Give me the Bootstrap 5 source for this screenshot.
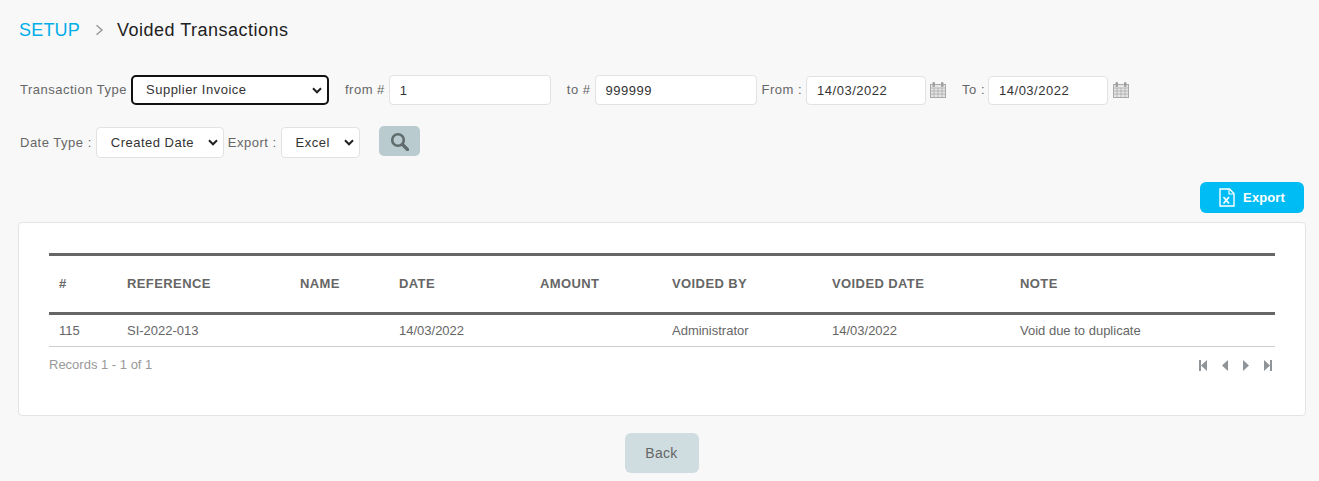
<!DOCTYPE html>
<html lang="en">
<head>
<meta charset="utf-8">
<title>Voided Transactions</title>
<link href="https://cdn.jsdelivr.net/npm/bootstrap@5.3.0/dist/css/bootstrap.min.css" rel="stylesheet">
<style>
body{background:#f8f8f8;font-family:"Liberation Sans",Arial,sans-serif;color:#666;height:481px;overflow:hidden}
.page-wrap{padding:18px 13px 0 18px}
.crumbs{height:24px;font-size:18px;letter-spacing:.5px;line-height:24px;color:#222;margin-left:1px}
.crumbs a{color:#00aee8;text-decoration:none;font-size:18px;letter-spacing:.2px}
.crumb-sep{width:37px;justify-content:center;padding-left:2px}
.filter-line{font-size:13px;letter-spacing:.5px;color:#666;padding-left:2px}
.line-a{margin-top:33px;height:30px}
.line-b{margin-top:22px;height:31px}
.filter-line .form-control,.filter-line .form-select{font-size:13px;letter-spacing:.5px;color:#333;border:1px solid #e2e2e2;border-radius:4px;height:30px;min-height:0;padding:0 10px;box-shadow:none;background-color:#fff;flex:none}
.filter-line .form-select{padding:0 24px 0 14px;background-position:right 5px center;background-size:10px 7px;background-image:url("data:image/svg+xml,%3csvg xmlns='http://www.w3.org/2000/svg' viewBox='0 0 10 7'%3e%3cpath fill='none' stroke='%23222' stroke-width='2' d='M1 1.300l4 4 4-4'/%3e%3c/svg%3e")}
.sel-type{width:198px;margin-left:4px}
.filter-line .sel-type{border:2px solid #111;border-radius:5px;padding-left:13px}
.inp-num{width:162px}
.inp-date{width:120px;margin-top:1px}
.filter-line .inp-date{height:29px}
.lbl-from{margin-left:16px;margin-right:4px}
.lbl-to{margin-left:16px;margin-right:4px}
.lbl-dfrom{margin-left:5px;margin-right:4px}
.lbl-dto{margin-left:16px;margin-right:3px}
.cal{margin-left:4px;flex:none}
.cal2{margin-left:5px}
.sel-date{width:128px;margin-left:4px;margin-right:4px}
.sel-exp{width:79px;margin-left:4px;margin-right:19px}
.filter-line .sel-date,.filter-line .sel-exp{height:31px}
.btn-find{width:41px;height:30px;background:#b9cbcf;border:0;border-radius:5px;padding:0;margin-top:-3px}
.export-row{margin-top:24px;height:31px}
.btn-xls{width:104px;height:31px;background:#00bcf5;border:0;border-radius:6px;color:#fff;font-size:13px;font-weight:700;letter-spacing:.1px;padding:0;margin-right:2px}
.btn-xls:hover{background:#00bcf5;color:#fff}
.panel{margin-top:9px;height:194px;border:1px solid #e4e4e4;border-radius:4px;background:#fff;padding:30px 30px 0}
.vt{font-size:13px;color:#666;margin:0;table-layout:fixed;width:100%}
.vt>:not(caption)>*>*{color:#666;background:transparent;box-shadow:none}
.vt thead th{height:59px;padding:0 10px;vertical-align:middle;font-size:13px;font-weight:700;letter-spacing:.4px;border-bottom:0}
.vt thead tr{border-top:3px solid #666;border-bottom:3px solid #666}
.vt tbody td{height:33px;padding:0 10px;vertical-align:middle;border-bottom:1px solid #ccc}
.c1{width:68px}.c2{width:173px}.c3{width:99px}.c4{width:141px}.c5{width:132px}.c6{width:160px}.c7{width:188px}.c8{width:265px}
.rec-row{font-size:13px;color:#999;margin-top:10px;height:16px;line-height:16px}
.pager{gap:13px;margin-right:2px;margin-top:1px}
.back-row{margin-top:17px}
.btn-back{width:74px;height:40px;background:#cfdde0;border:0;border-radius:6px;color:#666;font-size:14px;letter-spacing:.3px;padding:0;margin-left:-1px}
.btn-back:hover{background:#cfdde0;color:#666}
</style>
</head>
<body>
<div class="page-wrap">
  <div class="crumbs d-flex align-items-center">
    <a href="#">SETUP</a>
    <span class="crumb-sep d-flex"><svg width="9" height="12" viewBox="0 0 9 12"><path d="M1.500 1.200 7 6l-5.500 4.800" fill="none" stroke="#999" stroke-width="1.500"/></svg></span>
    <span>Voided Transactions</span>
  </div>

  <div class="filter-line line-a d-flex align-items-center">
    <span>Transaction Type</span>
    <select class="form-select sel-type"><option>Supplier Invoice</option></select>
    <span class="lbl-from">from #</span>
    <input class="form-control inp-num" value="1">
    <span class="lbl-to">to #</span>
    <input class="form-control inp-num" value="999999">
    <span class="lbl-dfrom">From :</span>
    <input class="form-control inp-date" value="14/03/2022">
    <svg class="cal" width="16" height="16" viewBox="0 0 16 16"><g fill="none" stroke="#a9a9a9"><rect x=".5" y="2.500" width="15" height="13" fill="#e6e6e6"/><path d="M.5 6h15M.5 9h15M.5 12h15M4 6v9.500M8 6v9.500M12 6v9.500" stroke-width=".8"/></g><rect x="2.500" y="0" width="2.500" height="5" rx="1" fill="#a0a0a0"/><rect x="11" y="0" width="2.500" height="5" rx="1" fill="#a0a0a0"/></svg>
    <span class="lbl-dto">To :</span>
    <input class="form-control inp-date" value="14/03/2022">
    <svg class="cal cal2" width="16" height="16" viewBox="0 0 16 16"><g fill="none" stroke="#a9a9a9"><rect x=".5" y="2.500" width="15" height="13" fill="#e6e6e6"/><path d="M.5 6h15M.5 9h15M.5 12h15M4 6v9.500M8 6v9.500M12 6v9.500" stroke-width=".8"/></g><rect x="2.500" y="0" width="2.500" height="5" rx="1" fill="#a0a0a0"/><rect x="11" y="0" width="2.500" height="5" rx="1" fill="#a0a0a0"/></svg>
  </div>

  <div class="filter-line line-b d-flex align-items-center">
    <span>Date Type :</span>
    <select class="form-select sel-date"><option>Created Date</option></select>
    <span>Export :</span>
    <select class="form-select sel-exp"><option>Excel</option></select>
    <button class="btn btn-find d-flex align-items-center justify-content-center" aria-label="Search"><svg width="19" height="19" viewBox="0 0 19 19"><circle cx="8" cy="8" r="5.800" fill="none" stroke="#5f6b6d" stroke-width="2.600"/><path d="m12.500 12.500 5 5" stroke="#5f6b6d" stroke-width="3.200" stroke-linecap="round"/></svg></button>
  </div>

  <div class="export-row d-flex justify-content-end">
    <button class="btn btn-xls d-flex align-items-center justify-content-center gap-2"><svg width="16" height="19" viewBox="0 0 16 19"><path d="M1 1h9.500L15 5.500V18H1z" fill="none" stroke="#fff" stroke-width="1.400"/><path d="M10 1v5h5" fill="none" stroke="#fff" stroke-width="1.100"/><path d="m4.500 9 5.500 6.500M10 9l-5.500 6.500" stroke="#fff" stroke-width="1.700"/></svg><span>Export</span></button>
  </div>

  <div class="panel">
    <table class="table vt">
      <colgroup><col class="c1"><col class="c2"><col class="c3"><col class="c4"><col class="c5"><col class="c6"><col class="c7"><col class="c8"></colgroup>
      <thead><tr><th>#</th><th>REFERENCE</th><th>NAME</th><th>DATE</th><th>AMOUNT</th><th>VOIDED BY</th><th>VOIDED DATE</th><th>NOTE</th></tr></thead>
      <tbody><tr><td>115</td><td>SI-2022-013</td><td></td><td>14/03/2022</td><td></td><td>Administrator</td><td>14/03/2022</td><td>Void due to duplicate</td></tr></tbody>
    </table>
    <div class="rec-row d-flex justify-content-between">
      <span>Records 1 - 1 of 1</span>
      <span class="pager d-flex align-items-center">
        <svg width="10" height="11" viewBox="0 0 10 11"><path d="M1 0h2v11H1zM9 0v11L3 5.500z" fill="#8f9499"/></svg>
        <svg width="8" height="11" viewBox="0 0 8 11"><path d="M7 0v11L1 5.500z" fill="#8f9499"/></svg>
        <svg width="8" height="11" viewBox="0 0 8 11"><path d="M1 0v11l6-5.500z" fill="#8f9499"/></svg>
        <svg width="10" height="11" viewBox="0 0 10 11"><path d="M1 0v11l6-5.500zM7 0h2v11H7z" fill="#8f9499"/></svg>
      </span>
    </div>
  </div>

  <div class="back-row d-flex justify-content-center">
    <button class="btn btn-back">Back</button>
  </div>
</div>
<script src="https://cdn.jsdelivr.net/npm/bootstrap@5.3.0/dist/js/bootstrap.bundle.min.js"></script>
</body>
</html>
